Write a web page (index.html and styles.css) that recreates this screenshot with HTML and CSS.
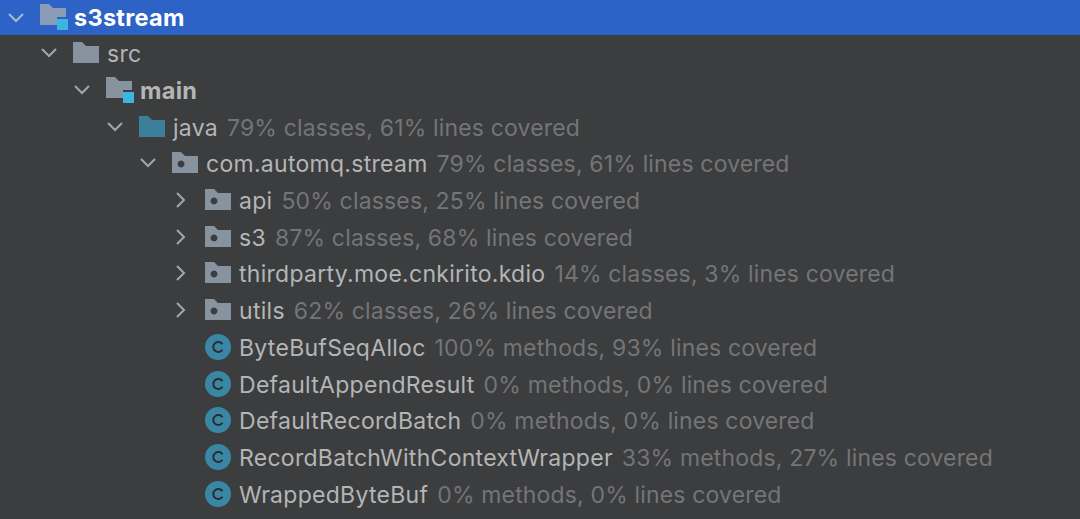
FILE: index.html
```html
<!DOCTYPE html>
<html lang="en">
<head>
    <meta charset="UTF-8">
    <meta name="viewport" content="width=device-width, initial-scale=1.0">
    <title>Project coverage</title>
    <link rel="stylesheet" href="styles.css">
</head>
<body>
    <svg class="defs" width="0" height="0">
        <symbol id="open" viewBox="0 0 18 18"><path d="M2 5l7 7 7-7" fill="none" stroke="currentColor" stroke-width="2"/></symbol>
        <symbol id="closed" viewBox="0 0 18 18"><path d="M5 2l7 7-7 7" fill="none" stroke="currentColor" stroke-width="2"/></symbol>
        <symbol id="folder" viewBox="0 0 26 22"><path d="M0 0h9l4 4h13v17H0z"/></symbol>
        <symbol id="package" viewBox="0 0 26 22"><path fill-rule="evenodd" d="M0 0h9l4 4h13v17H0zM9 8.500a3.500 3.500 0 1 0 .01 0z"/></symbol>
        <symbol id="module" viewBox="0 0 29 27"><path d="M0 0h9l4 4h13v9h-9v8H0z"/><path fill="#3bb6e0" d="M17 15h11v11H17z"/></symbol>
        <symbol id="class" viewBox="0 0 26 26"><circle cx="13" cy="13" r="13" fill="#3a87a5"/><path d="M17.500 10.300a5 5 0 1 0 0 5.400" fill="none" stroke="#2b2d30" stroke-width="2"/></symbol>
    </svg>

    <ul class="tree">
        <li class="row selected">
            <svg class="arrow"><use href="#open"/></svg>
            <svg class="icon module-icon"><use href="#module"/></svg>
            <span class="name bold">s3stream</span>
        </li>
        <li class="row level-1">
            <svg class="arrow"><use href="#open"/></svg>
            <svg class="icon"><use href="#folder"/></svg>
            <span class="name">src</span>
        </li>
        <li class="row level-2">
            <svg class="arrow"><use href="#open"/></svg>
            <svg class="icon module-icon"><use href="#module"/></svg>
            <span class="name bold">main</span>
        </li>
        <li class="row level-3">
            <svg class="arrow"><use href="#open"/></svg>
            <svg class="icon source"><use href="#folder"/></svg>
            <span class="name">java</span>
            <span class="stats">79% classes, 61% lines covered</span>
        </li>
        <li class="row level-4">
            <svg class="arrow"><use href="#open"/></svg>
            <svg class="icon"><use href="#package"/></svg>
            <span class="name">com.automq.stream</span>
            <span class="stats">79% classes, 61% lines covered</span>
        </li>
        <li class="row level-5">
            <svg class="arrow"><use href="#closed"/></svg>
            <svg class="icon"><use href="#package"/></svg>
            <span class="name">api</span>
            <span class="stats">50% classes, 25% lines covered</span>
        </li>
        <li class="row level-5">
            <svg class="arrow"><use href="#closed"/></svg>
            <svg class="icon"><use href="#package"/></svg>
            <span class="name">s3</span>
            <span class="stats">87% classes, 68% lines covered</span>
        </li>
        <li class="row level-5">
            <svg class="arrow"><use href="#closed"/></svg>
            <svg class="icon"><use href="#package"/></svg>
            <span class="name">thirdparty.moe.cnkirito.kdio</span>
            <span class="stats">14% classes, 3% lines covered</span>
        </li>
        <li class="row level-5">
            <svg class="arrow"><use href="#closed"/></svg>
            <svg class="icon"><use href="#package"/></svg>
            <span class="name">utils</span>
            <span class="stats">62% classes, 26% lines covered</span>
        </li>
        <li class="row level-5 leaf">
            <svg class="icon"><use href="#class"/></svg>
            <span class="name">ByteBufSeqAlloc</span>
            <span class="stats">100% methods, 93% lines covered</span>
        </li>
        <li class="row level-5 leaf">
            <svg class="icon"><use href="#class"/></svg>
            <span class="name">DefaultAppendResult</span>
            <span class="stats">0% methods, 0% lines covered</span>
        </li>
        <li class="row level-5 leaf">
            <svg class="icon"><use href="#class"/></svg>
            <span class="name">DefaultRecordBatch</span>
            <span class="stats">0% methods, 0% lines covered</span>
        </li>
        <li class="row level-5 leaf">
            <svg class="icon"><use href="#class"/></svg>
            <span class="name">RecordBatchWithContextWrapper</span>
            <span class="stats">33% methods, 27% lines covered</span>
        </li>
        <li class="row level-5 leaf">
            <svg class="icon"><use href="#class"/></svg>
            <span class="name">WrappedByteBuf</span>
            <span class="stats">0% methods, 0% lines covered</span>
        </li>
    </ul>
</body>
</html>
```

FILE: styles.css
```css
html, body {
    height: 100%;
}

body {
    margin: 0;
    background-color: #3c3d3f;
    color: #b4b5b5;
    font-family: Inter, "Liberation Sans", sans-serif;
    font-size: 23px;
    letter-spacing: 0.28px;
    overflow: hidden;
}

.defs {
    position: absolute;
}

.tree {
    list-style: none;
    margin: 0;
    padding: 0;
}

.row {
    display: flex;
    align-items: center;
    height: 36.7px;
    padding-left: 7px;
    white-space: nowrap;
}

.level-1 { padding-left: 40px; }
.level-2 { padding-left: 73px; }
.level-3 { padding-left: 106px; }
.level-4 { padding-left: 139px; }
.level-5 { padding-left: 172px; }

.leaf {
    padding-left: 205px;
}

.selected {
    height: 35px;
    background-color: #2d62c7;
    color: #fff;
}

.arrow {
    width: 18px;
    height: 18px;
    margin-right: 15px;
    color: #a4a6a8;
    flex-shrink: 0;
}

.selected .arrow {
    color: #a9b9d6;
}

.icon {
    width: 26px;
    height: 26px;
    margin-right: 8px;
    fill: #87949f;
    flex-shrink: 0;
}

.module-icon {
    width: 29px;
    height: 27px;
    margin-right: 5px;
}

.selected .icon {
    fill: #8a9bb5;
}

.source {
    fill: #3b7f9b;
}

.name {
    margin-right: 9px;
    padding-top: 2px;
}

.name.bold {
    font-weight: 700;
    font-size: 23.5px;
    padding-top: 0;
}

.stats {
    color: #747576;
    letter-spacing: 0.16px;
    padding-top: 2px;
}
```
